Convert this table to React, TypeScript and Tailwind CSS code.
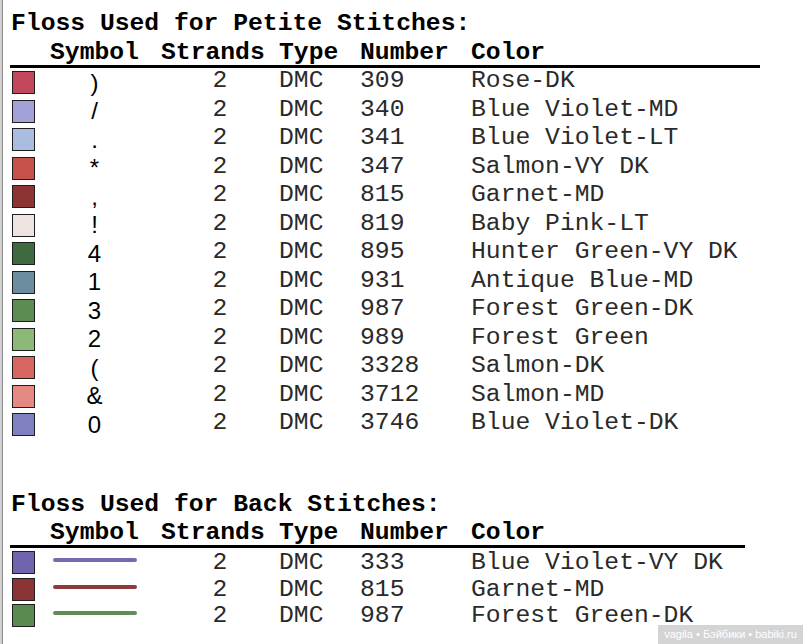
import React from "react";

const mono = { fontFamily: '"Liberation Mono", "Courier New", monospace' } as const;
const sans = { fontFamily: '"Liberation Sans", Arial, sans-serif' } as const;

type Row = [string, string, string, string];

const petite: Row[] = [
  ["#c2475a", ")", "309", "Rose-DK"],
  ["#a0a2d8", "/", "340", "Blue Violet-MD"],
  ["#a9bde0", ".", "341", "Blue Violet-LT"],
  ["#c6504a", "*", "347", "Salmon-VY DK"],
  ["#8c3434", ",", "815", "Garnet-MD"],
  ["#efe3df", "!", "819", "Baby Pink-LT"],
  ["#3f6a3f", "4", "895", "Hunter Green-VY DK"],
  ["#6c8da0", "1", "931", "Antique Blue-MD"],
  ["#5d8c52", "3", "987", "Forest Green-DK"],
  ["#8cb878", "2", "989", "Forest Green"],
  ["#d8675f", "(", "3328", "Salmon-DK"],
  ["#e48a82", "&", "3712", "Salmon-MD"],
  ["#7f80bf", "0", "3746", "Blue Violet-DK"],
];

const back: [string, string, string, string][] = [
  ["#6f64ad", "#7669b1", "333", "Blue Violet-VY DK"],
  ["#8c3434", "#8e3b3b", "815", "Garnet-MD"],
  ["#5b8a50", "#5f8e56", "987", "Forest Green-DK"],
];

function ColumnHeads({ lineW }: { lineW: string }) {
  return (
    <div
      className={`flex h-[30px] border-b-[3px] border-black text-[24.7px] leading-[29px] font-bold text-black whitespace-pre ${lineW}`}
      style={mono}
    >
      <div className="w-[40px]" />
      <div className="w-[89px]">Symbol</div>
      <div className="w-[140px] pl-[22px]">Strands</div>
      <div className="w-[81px]">Type</div>
      <div className="w-[111px]">Number</div>
      <div>Color</div>
    </div>
  );
}

function TextCells({ num, color, lead }: { num: string; color: string; lead: string }) {
  return (
    <>
      <div className={`w-[140px] pl-[73.6px] text-[24.7px] ${lead} text-[#2a2a2a]`} style={mono}>2</div>
      <div className={`w-[81px] text-[24.7px] ${lead} text-[#2a2a2a]`} style={mono}>DMC</div>
      <div className={`w-[111px] text-[24.7px] ${lead} text-[#2a2a2a]`} style={mono}>{num}</div>
      <div className={`text-[24.7px] ${lead} text-[#2a2a2a] whitespace-pre`} style={mono}>{color}</div>
    </>
  );
}

export default function App() {
  return (
    <div className="relative h-[644px] w-[803px] overflow-hidden bg-white border-l-2 border-[#d0d0d0]">
      <div className="h-full border-l border-[#8c8c8c] pl-[7px] pt-[9px]">
        <div className="h-[29px] pl-[1px] text-[24.7px] leading-[29px] font-bold text-black whitespace-pre" style={mono}>
          Floss Used for Petite Stitches:
        </div>
        <ColumnHeads lineW="w-[750px]" />
        {petite.map(([c, sym, num, name], i) => (
          <div key={i} className="flex items-start h-[28.5px]">
            <div className="w-[40px] pl-[2px] pt-[3px]">
              <div className="w-[23px] h-[23px] border border-[#1e1e1e]" style={{ backgroundColor: c }} />
            </div>
            <div className="w-[89px] text-center text-[24px] leading-[24px] pt-[2.7px] text-black" style={sans}>
              {sym}
            </div>
            <TextCells num={num} color={name} lead="leading-[25px]" />
          </div>
        ))}

        <div className="h-[51.5px]" />
        <div className="h-[28px] pl-[1px] text-[24.7px] leading-[28px] font-bold text-black whitespace-pre" style={mono}>
          Floss Used for Back Stitches:
        </div>
        <ColumnHeads lineW="w-[735px]" />
        {back.map(([c, lc, num, name], i) => (
          <div key={i} className="flex items-start h-[26.5px]">
            <div className="w-[40px] pl-[2px] pt-[3px]">
              <div className="w-[23px] h-[23px] border border-[#1e1e1e]" style={{ backgroundColor: c }} />
            </div>
            <div className="w-[89px] pt-[10px] pl-[3px]">
              <div className="w-[84px] h-[4px] rounded-full" style={{ backgroundColor: lc }} />
            </div>
            <TextCells num={num} color={name} lead="leading-[28px]" />
          </div>
        ))}
      </div>

      <div
        className="absolute right-0 bottom-0 w-[145px] h-[19px] bg-[#c9c9c9]/80 text-white text-[11px] leading-[19px] text-center"
        style={sans}
      >
        vagila • Бэйбики • babiki.ru
      </div>
    </div>
  );
}
